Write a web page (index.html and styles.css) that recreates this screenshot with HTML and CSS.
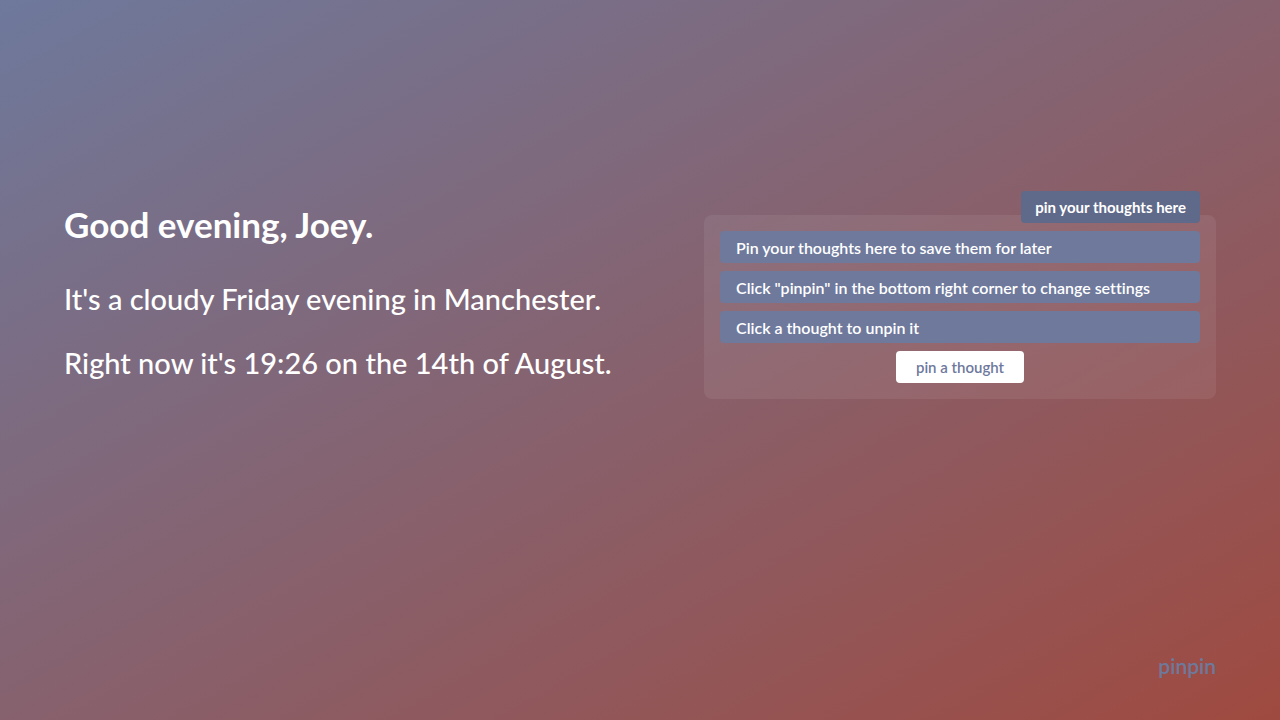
FILE: index.html
```html
<!DOCTYPE html>
<html lang="en">
<head>
<meta charset="utf-8">
<meta name="viewport" content="width=device-width, initial-scale=1">
<title>pinpin</title>
<link rel="stylesheet" href="styles.css">
</head>
<body>
<main class="dashboard">
  <section class="greeting">
    <h1 class="greeting-title">Good evening, Joey.</h1>
    <p class="greeting-line">It's a cloudy Friday evening in Manchester.</p>
    <p class="greeting-line">Right now it's 19:26 on the 14th of August.</p>
  </section>
  <section class="board" aria-labelledby="board-title">
    <h2 class="board-title" id="board-title">pin your thoughts here</h2>
    <ul class="thoughts">
      <li><button class="thought" type="button">Pin your thoughts here to save them for later</button></li>
      <li><button class="thought" type="button">Click "pinpin" in the bottom right corner to change settings</button></li>
      <li><button class="thought" type="button">Click a thought to unpin it</button></li>
    </ul>
    <button class="pin-button" type="button">pin a thought</button>
  </section>
</main>
<footer class="footer">
  <button class="brand" type="button">pinpin</button>
</footer>
</body>
</html>
```

FILE: styles.css
```css
* {
  box-sizing: border-box;
}

body {
  margin: 0;
  min-height: 100vh;
  display: flex;
  flex-direction: column;
  font-family: Lato, sans-serif;
  font-variant-ligatures: none;
  color: #fff;
  background: linear-gradient(to bottom right, #6e799c, #9f4a40);
}

button {
  border: 0;
  font-family: inherit;
  font-variant-ligatures: none;
  cursor: pointer;
}

.dashboard {
  flex: 1;
  display: grid;
  grid-template-columns: minmax(0, 9fr) minmax(0, 8fr);
  align-items: center;
  gap: 64px;
  padding: 0 64px;
}

.greeting {
  display: flex;
  flex-direction: column;
  gap: 24px;
  padding-bottom: 31px;
}

.greeting-title {
  margin: 0 0 7px;
  font-size: 35px;
  line-height: 48px;
  font-weight: 700;
}

.greeting-line {
  margin: 0;
  font-size: 29px;
  line-height: 40px;
  font-weight: 500;
}

.board {
  position: relative;
  display: flex;
  flex-direction: column;
  align-items: center;
  gap: 8px;
  padding: 16px;
  border-radius: 8px;
  background: rgba(255, 255, 255, 0.07);
}

.board-title {
  position: absolute;
  top: -24px;
  right: 16px;
  margin: 0;
  padding: 0 14px;
  border-radius: 4px;
  background: #5f6989;
  font-size: 15px;
  line-height: 32px;
  font-weight: 700;
}

.thoughts {
  align-self: stretch;
  display: flex;
  flex-direction: column;
  gap: 8px;
  margin: 0;
  padding: 0;
  list-style: none;
}

.thought {
  display: block;
  width: 100%;
  padding: 2px 16px 0;
  border-radius: 4px;
  background: #6e799c;
  color: #fff;
  font-size: 16px;
  line-height: 30px;
  font-weight: 600;
  text-align: left;
}

.pin-button {
  padding: 0 20px;
  border-radius: 4px;
  background: #fff;
  color: #6e799c;
  font-size: 15px;
  line-height: 32px;
  font-weight: 600;
}

.footer {
  display: flex;
  justify-content: flex-end;
  padding: 36px 64px 38px;
}

.brand {
  padding: 0;
  background: none;
  color: #6e799c;
  font-size: 21px;
  line-height: 32px;
  font-weight: 600;
}
```
